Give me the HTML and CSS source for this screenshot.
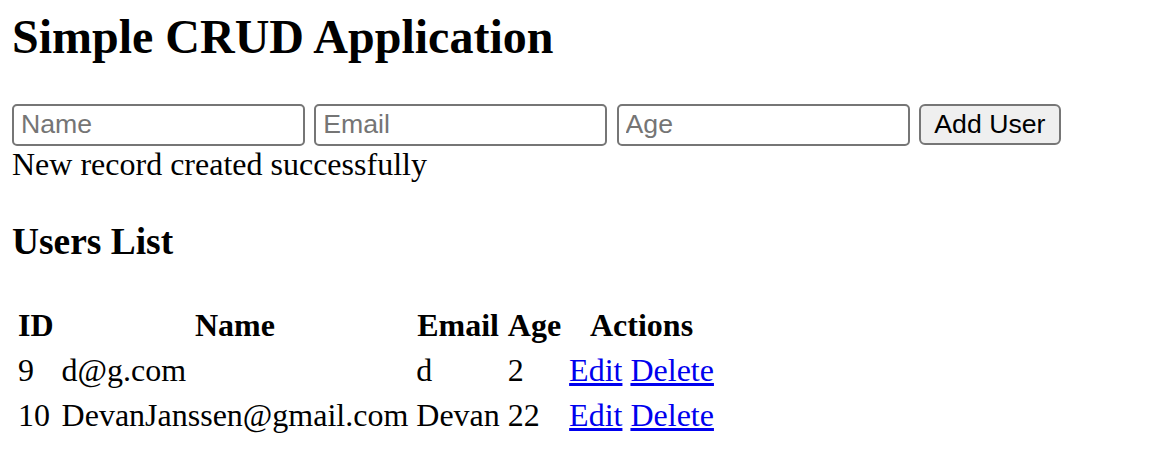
FILE: index.html
```html
<!DOCTYPE html>
<html>
<head>
<meta charset="utf-8">
<title>Simple CRUD Application</title>
<link rel="stylesheet" href="styles.css">
</head>
<body>
<h1 class="title">Simple CRUD Application</h1>
<form class="user-form">
  <input class="field" type="text" placeholder="Name">
  <input class="field" type="email" placeholder="Email">
  <input class="field" type="number" placeholder="Age">
  <button class="add-btn" type="button">Add User</button>
</form>
<div class="message">New record created successfully</div>
<h3 class="section-title">Users List</h3>
<table class="users">
  <thead>
    <tr><th>ID</th><th>Name</th><th>Email</th><th>Age</th><th>Actions</th></tr>
  </thead>
  <tbody>
    <tr><td>9</td><td>d@g.com</td><td>d</td><td>2</td><td><a href="#" class="link">Edit</a> <a href="#" class="link">Delete</a></td></tr>
    <tr><td>10</td><td>DevanJanssen@gmail.com</td><td>Devan</td><td>22</td><td><a href="#" class="link">Edit</a> <a href="#" class="link">Delete</a></td></tr>
  </tbody>
</table>
</body>
</html>
```
FILE: styles.css
```css
html, body {
  background: #ffffff;
}
body {
  margin: 0 12px;
  font-family: "Liberation Serif", "Times New Roman", serif;
  font-size: 32px;
  color: #000000;
}
.title {
  font-size: 48px;
  font-weight: bold;
  margin: 9px 0 39.84px 0;
}
.user-form {
  display: flex;
  align-items: flex-start;
  gap: 9.3px;
  margin: 0;
}
.field {
  box-sizing: border-box;
  width: 293px;
  height: 42px;
  margin: 0;
  padding: 2px 7px;
  border: 2px solid #767676;
  border-radius: 5px;
  font-family: "Liberation Sans", Arial, sans-serif;
  font-size: 26.67px;
  color: #000;
  background: #fff;
  outline: none;
  -moz-appearance: textfield;
}
.field::-webkit-outer-spin-button,
.field::-webkit-inner-spin-button {
  -webkit-appearance: none;
  margin: 0;
}
.field::placeholder {
  color: #757575;
}
.add-btn {
  box-sizing: border-box;
  width: 142px;
  height: 41px;
  margin: 0;
  padding: 0 12px;
  border: 2px solid #767676;
  border-radius: 6px;
  background: #efefef;
  font-family: "Liberation Sans", Arial, sans-serif;
  font-size: 26.67px;
  color: #000;
}
.message {
  line-height: normal;
}
.section-title {
  font-size: 37.44px;
  font-weight: bold;
  margin: 37.44px 0;
}
.users {
  border-collapse: separate;
  border-spacing: 4px;
}
.users th,
.users td {
  padding: 2px;
}
.users th {
  font-weight: bold;
  text-align: center;
}
.users td {
  text-align: left;
}
.link {
  color: #0000ee;
  text-decoration: underline;
}
```
